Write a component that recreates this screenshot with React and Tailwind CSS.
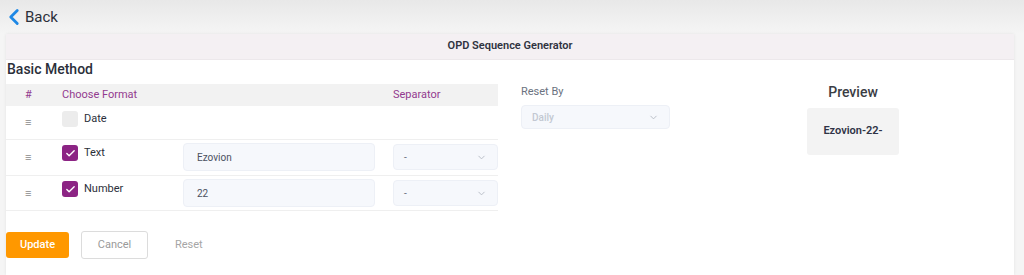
import { ChevronLeft, ChevronDown, Check } from 'lucide-react'

const rows = [
  { label: 'Date', checked: false },
  { label: 'Text', checked: true, value: 'Ezovion', sep: '-', h: 'h-[36px]' },
  { label: 'Number', checked: true, value: '22', sep: '-', h: 'h-[35px]' },
]

function Handle() {
  return <span className="text-[11px] leading-none text-[#8a8a8a]">≡</span>
}

function CheckBox({ checked }) {
  if (!checked) return <span className="block w-[16px] h-[16px] rounded-[3px] bg-[#ececec]" />
  return (
    <span className="flex items-center justify-center w-[16px] h-[16px] rounded-[3px] bg-[#8c2484]">
      <Check size={11} strokeWidth={3} className="text-white" />
    </span>
  )
}

function Select({ value, className, muted }) {
  return (
    <div className={`flex items-center justify-between rounded-[4px] border border-[#edf0f6] bg-[#f6f8fc] px-[10px] ${className}`}>
      <span className={`text-[10px] ${muted ? 'text-[#c3c8d2] font-medium' : 'text-[#6b7280]'}`}>{value}</span>
      <ChevronDown size={11} className="text-[#b5bac4]" />
    </div>
  )
}

export default function App() {
  return (
    <div className="w-[1024px] h-[275px] overflow-hidden bg-[#f5f5f5] font-['Roboto',sans-serif]">
      {/* back link */}
      <div className="h-[34px] flex items-center pl-[1px] bg-gradient-to-b from-[#e8e8e8] to-[#f5f5f5]">
        <ChevronLeft size={26} strokeWidth={2.6} className="text-[#1e88e5]" />
        <span className="ml-[-2px] text-[15px] text-[#2b2f3a]">Back</span>
      </div>

      <div className="ml-[6px] w-[1008px] h-[241px] bg-white shadow-[0_0_3px_rgba(0,0,0,0.08)]">
        <div className="h-[26px] bg-[#f4f0f3] border-b border-[#ece8eb] flex items-center justify-center">
          <span className="text-[11px] font-semibold text-[#2f3340]">OPD Sequence Generator</span>
        </div>

        <div className="flex">
          {/* table */}
          <div className="w-[492px]">
            <div className="pt-[2px] h-[24px] text-[14px] font-medium leading-none text-[#2b2f3a] pl-[1px]">Basic Method</div>
            <div className="h-[22px] bg-[#f2f2f2] flex items-center text-[11px] text-[#933a8f]">
              <span className="pl-[19px] w-[56px]">#</span>
              <span className="w-[331px]">Choose Format</span>
              <span>Separator</span>
            </div>
            {rows.map((r) => (
              <div key={r.label} className={`flex border-b border-[#efefef] ${r.h || 'h-[34px]'}`}>
                <div className="w-[56px] pl-[19px] flex items-center">
                  <Handle />
                </div>
                <div className="w-[121px] flex items-start gap-[6px] pt-[5px]">
                  <CheckBox checked={r.checked} />
                  <span className="text-[11px] text-[#2b2f3a] leading-[16px]">{r.label}</span>
                </div>
                {r.value && (
                  <>
                    <div className="mt-[3px] w-[192px] h-[28px] rounded-[4px] border border-[#edf0f6] bg-[#f6f8fc] flex items-center pl-[13px] text-[10px] text-[#4b5160]">
                      {r.value}
                    </div>
                    <Select value={r.sep} className="ml-[18px] mt-[4px] w-[105px] h-[26px]" />
                  </>
                )}
              </div>
            ))}
          </div>

          {/* reset by */}
          <div className="ml-[23px] pt-[26px]">
            <div className="text-[11px] text-[#6b7280] leading-none">Reset By</div>
            <Select value="Daily" muted className="mt-[8px] w-[149px] h-[24px]" />
          </div>

          {/* preview */}
          <div className="ml-[137px] pt-[25px] flex flex-col items-center w-[92px]">
            <div className="text-[14px] font-medium text-[#3a3d44] leading-none">Preview</div>
            <div className="mt-[9px] w-[92px] h-[47px] rounded-[3px] bg-[#f3f3f3] flex items-center justify-center text-[11px] font-semibold text-[#2f3346]">
              Ezovion-22-
            </div>
          </div>
        </div>

        <div className="flex items-center mt-[20px]">
          <button className="w-[63px] h-[26px] rounded-[3px] bg-[#ff9800] text-white text-[11px] font-medium">Update</button>
          <button className="ml-[12px] w-[67px] h-[28px] rounded-[3px] border border-[#dcdcdc] bg-white text-[11px] text-[#9a9a9a]">Cancel</button>
          <button className="ml-[27px] text-[11px] text-[#a6a6a6]">Reset</button>
        </div>
      </div>
    </div>
  )
}
